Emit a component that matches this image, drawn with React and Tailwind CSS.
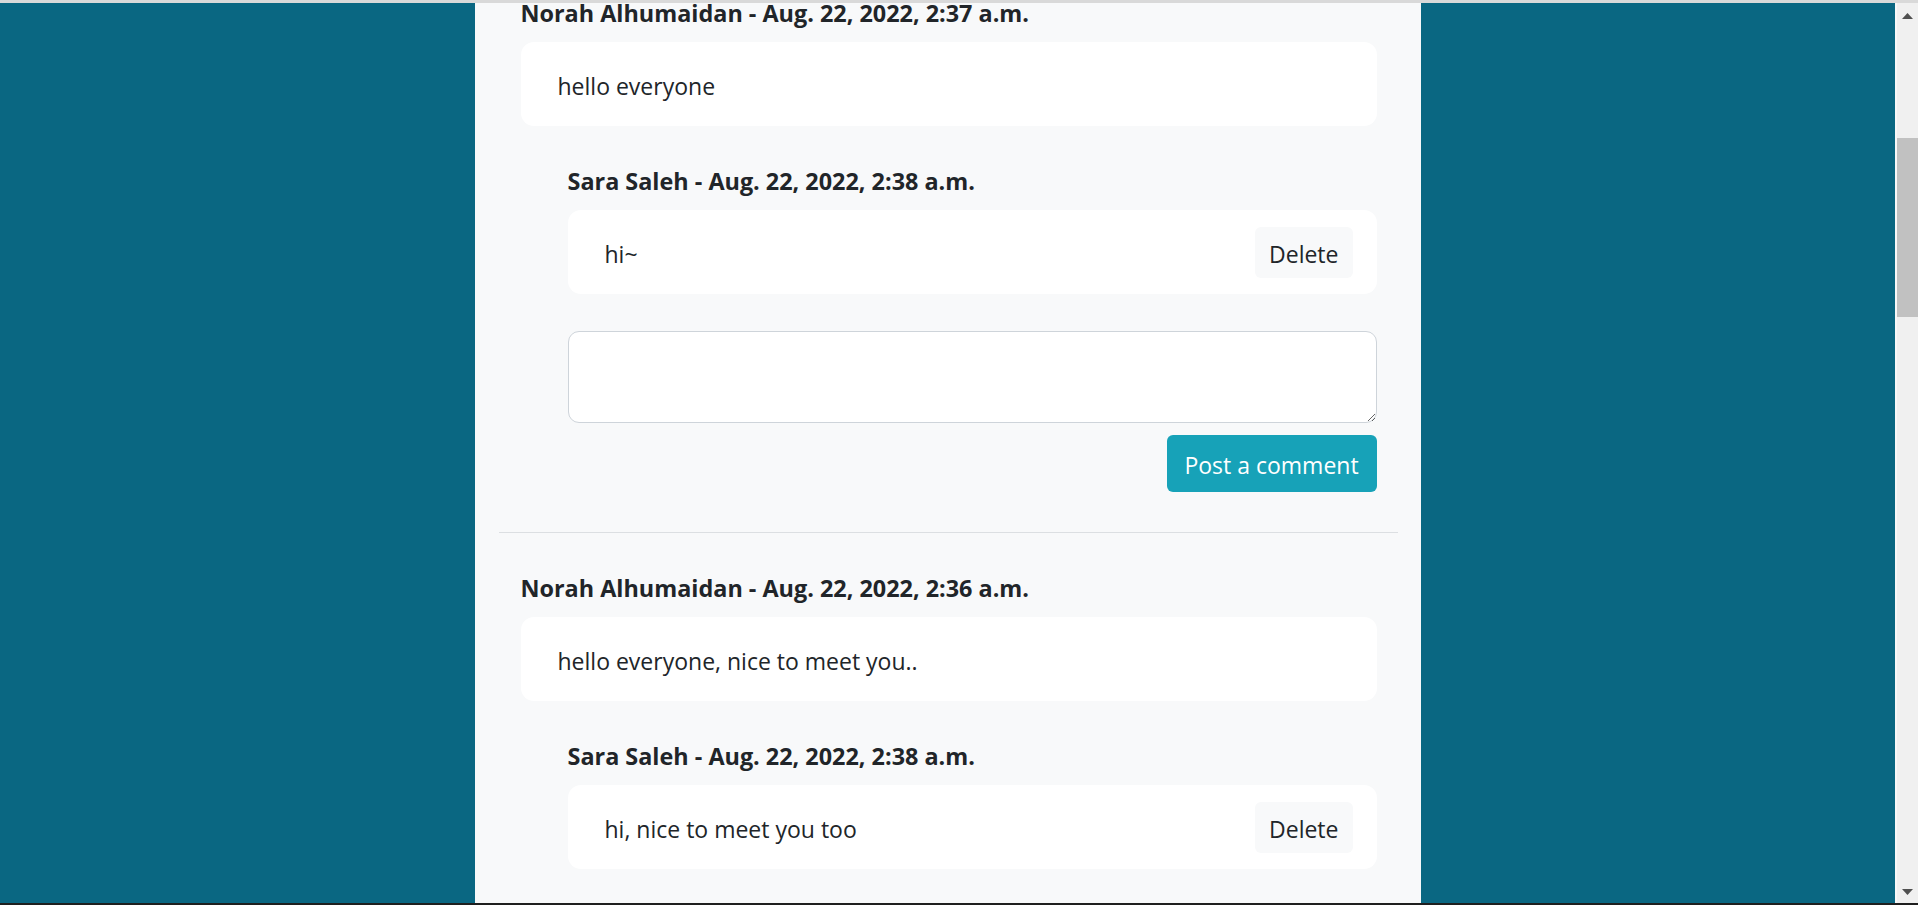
import React from "react";

const threads = [
  {
    author: "Norah Alhumaidan",
    date: "Aug. 22, 2022, 2:37 a.m.",
    body: "hello everyone",
    replies: [{ author: "Sara Saleh", date: "Aug. 22, 2022, 2:38 a.m.", body: "hi~" }],
    showForm: true,
  },
  {
    author: "Norah Alhumaidan",
    date: "Aug. 22, 2022, 2:36 a.m.",
    body: "hello everyone, nice to meet you..",
    replies: [
      { author: "Sara Saleh", date: "Aug. 22, 2022, 2:38 a.m.", body: "hi, nice to meet you too" },
    ],
    showForm: false,
  },
];

function Heading({ children, first }) {
  const box = first ? "leading-[20px] mb-[19px]" : "leading-[29px] mb-[14px]";
  return (
    <h5 className={"text-[23.4px] font-bold text-[#212529] " + box}>
      {children}
    </h5>
  );
}

function Bubble({ text, canDelete }) {
  return (
    <div className="h-[84px] rounded-[13px] bg-white flex items-center justify-between pl-[37px] pr-[24px]">
      <p className="pt-[5px] text-[23px] text-[#212529]">{text}</p>
      {canDelete && (
        <button className="h-[51px] px-[14px] pt-[4px] rounded-[6px] bg-[#f8f9fa] text-[23px] text-[#212529]">
          Delete
        </button>
      )}
    </div>
  );
}

function Thread({ thread, first }) {
  return (
    <div>
      <Heading first={first}>
        {thread.author} - {thread.date}
      </Heading>
      <Bubble text={thread.body} />

      <div className="ml-[47px]">
        {thread.replies.map((r, i) => (
          <div key={i} className="mt-[41px]">
            <Heading>
              {r.author} - {r.date}
            </Heading>
            <Bubble text={r.body} canDelete />
          </div>
        ))}

        {thread.showForm && (
          <div className="mt-[37px] flex flex-col items-end">
            <textarea className="w-full h-[92px] rounded-[11px] border border-[#ced4da] bg-white outline-none" />
            <button className="mt-[12px] w-[210px] h-[57px] pt-[4px] rounded-[6px] bg-[#17a2b8] text-white text-[23px]">
              Post a comment
            </button>
          </div>
        )}
      </div>
    </div>
  );
}

function Scrollbar() {
  return (
    <div className="w-[23px] shrink-0 bg-[#f0f0f0] border-l-2 border-[#f8f8f8] flex flex-col items-center">
      <svg width="11" height="6" viewBox="0 0 11 6" className="mt-[10px]">
        <polygon points="5.5,0 11,6 0,6" fill="#505050" />
      </svg>
      <div className="mt-[119px] w-full h-[179px] bg-[#c1c1c1]" />
      <div className="flex-1" />
      <svg width="11" height="6" viewBox="0 0 11 6" className="mb-[8px]">
        <polygon points="0,0 11,0 5.5,6" fill="#505050" />
      </svg>
    </div>
  );
}

export default function App() {
  return (
    <div
      className="h-screen w-full flex flex-col overflow-hidden"
      style={{ fontFamily: '"Open Sans", "Noto Sans", sans-serif' }}
    >
      <div className="h-[3px] bg-[#d9d9d9]" />

      <div className="flex-1 flex min-h-0">
        <main className="flex-1 bg-[#0a6782] overflow-hidden">
          <div className="w-[946px] mx-auto h-full bg-[#f8f9fa] pl-[46px] pr-[44px] overflow-hidden">
            <Thread thread={threads[0]} first />
            <hr className="mt-[40px] mb-[41px] -ml-[22px] -mr-[21px] border-0 border-t-[1.5px] border-[#dcdfe2]" />
            <Thread thread={threads[1]} />
          </div>
        </main>
        <Scrollbar />
      </div>

      <div className="h-[2px] bg-[#1f1f1f]" />
    </div>
  );
}
